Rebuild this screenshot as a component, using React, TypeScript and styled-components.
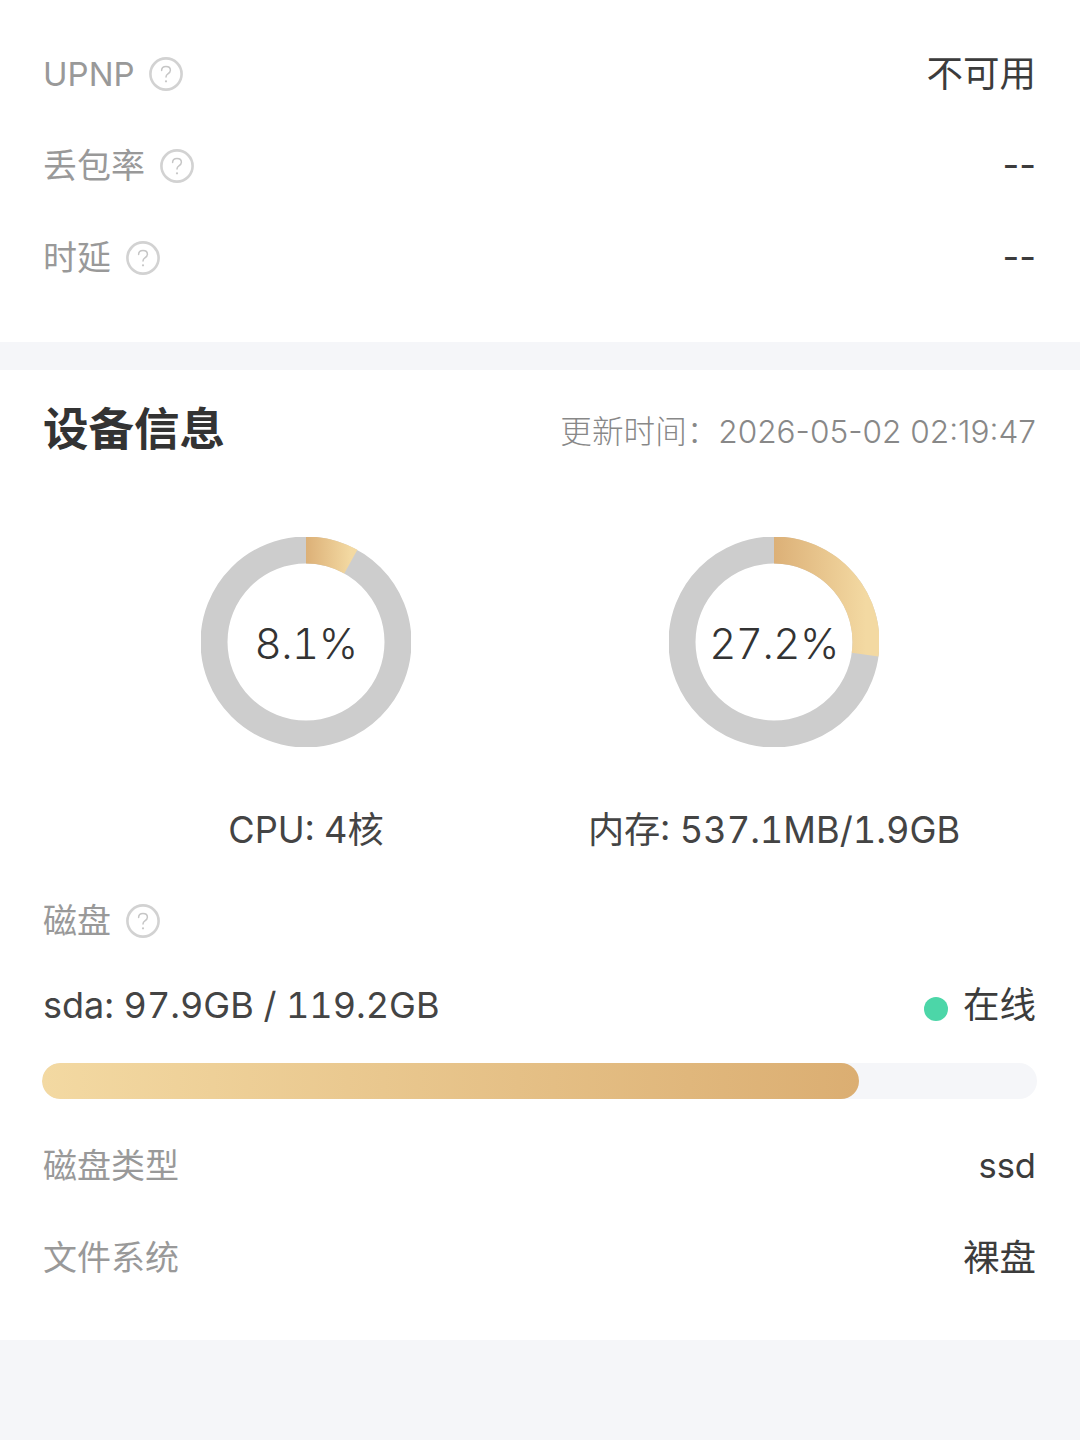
import React from "react";
import styled, { createGlobalStyle } from "styled-components";

const Global = createGlobalStyle`
  html, body { margin: 0; padding: 0; background: #f5f6f9; }
  * { box-sizing: border-box; }
  body {
    font-family: Inter, "Noto Sans CJK SC", sans-serif;
    font-kerning: none;
  }
`;

const Page = styled.div`
  width: 1080px;
  height: 1440px;
  background: #f5f6f9;
  display: flex;
  flex-direction: column;
`;

const NetworkCard = styled.section`
  background: #fff;
  height: 342px;
  padding: 28px 44px 0 43px;
  margin-bottom: 28px;
`;

const DeviceCard = styled.section`
  background: #fff;
  height: 970px;
  padding: 0 44px 0 43px;
`;

const Row = styled.div`
  height: 92px;
  display: flex;
  align-items: center;
  justify-content: space-between;
`;

const Label = styled.div`
  display: flex;
  align-items: center;
  gap: 15px;
  color: #999;
  font-weight: 400;
  font-size: 34px;
  line-height: 44px;
`;

const LatinLabel = styled(Label)`
  font-size: 33px;
  gap: 14px;
`;

const Value = styled.div<{ $size?: number }>`
  color: #3c3c3c;
  font-weight: 400;
  font-size: ${(p) => p.$size ?? 36.5}px;
  line-height: 44px;
`;

const Dashes = styled(Value)`
  margin-top: -2px;
`;

const Header = styled.div`
  height: 120px;
  display: flex;
  align-items: center;
  justify-content: space-between;
`;

const Title = styled.h2`
  margin: 0;
  font-size: 45.5px;
  font-weight: 700;
  line-height: 56px;
  color: #333;
`;

const Updated = styled.div`
  font-size: 31.6px;
  font-weight: 300;
  line-height: 44px;
  color: #888;
  margin-top: 4px;
`;

const Gauges = styled.div`
  display: grid;
  grid-template-columns: 468px 468px;
  margin: 47px 0 0 29px;
  font-variant-numeric: tabular-nums;
`;

const Gauge = styled.div`
  display: flex;
  flex-direction: column;
  align-items: center;
`;

const Ring = styled.div`
  position: relative;
  width: 210px;
  height: 210px;
`;

const Percent = styled.div`
  position: absolute;
  inset: 0;
  display: flex;
  align-items: center;
  justify-content: center;
  font-size: 42px;
  letter-spacing: -0.5px;
  font-weight: 300;
  color: #333;
  padding-top: 2px;
`;

const GaugeLabel = styled.div`
  margin-top: 56px;
  font-size: 36.2px;
  font-weight: 400;
  color: #444;
  line-height: 54px;
`;

const DiskHeading = styled(Label)`
  margin-top: 36px;
  height: 56px;
`;

const DiskRow = styled.div`
  margin-top: 28px;
  height: 56px;
  display: flex;
  align-items: center;
  justify-content: space-between;
`;

const DiskName = styled.div`
  font-size: 36px;
  font-weight: 400;
  color: #444;
  font-variant-numeric: tabular-nums;
`;

const Status = styled.div`
  display: flex;
  align-items: center;
  gap: 15px;
  font-size: 36.5px;
  font-weight: 400;
  color: #3c3c3c;
  padding-bottom: 6px;
`;

const Dot = styled.span`
  width: 24px;
  height: 24px;
  border-radius: 50%;
  background: #4cd6a8;
  margin-top: 14px;
`;

const Track = styled.div`
  margin-top: 30px;
  width: 995px;
  height: 36px;
  margin-left: -1px;
  border-radius: 18px;
  background: #f5f6f9;
  overflow: hidden;
  margin-bottom: 21px;
`;

const Fill = styled.div`
  height: 100%;
  border-radius: 18px;
  background: linear-gradient(90deg, #f3d9a2, #dbae72);
`;

const HelpIcon = () => (
  <svg width="34" height="34" viewBox="0 0 34 34" fill="none">
    <circle cx="17" cy="17" r="15.6" stroke="#d2d2d2" strokeWidth="2.6" />
    <path
      d="M12.6 13.6c0-2.6 2-4.1 4.4-4.1 2.5 0 4.4 1.5 4.4 3.7 0 1.9-1.2 2.8-2.5 3.7-1.2.8-1.9 1.5-1.9 3"
      stroke="#c6c6c6"
      strokeWidth="1.5"
      strokeLinecap="round"
    />
    <circle cx="17" cy="24.3" r="1.1" fill="#c6c6c6" />
  </svg>
);

const Donut = ({ value, id }: { value: number; id: string }) => {
  const c = 105;
  const r = 92;
  const a = (value / 100) * 2 * Math.PI;
  const x = c + r * Math.sin(a);
  const y = c - r * Math.cos(a);
  return (
    <Ring>
      <svg width="210" height="210" viewBox="0 0 210 210" fill="none">
        <defs>
          <linearGradient id={id} x1="0" y1="0" x2="1" y2="0">
            <stop offset="0" stopColor="#dcb077" />
            <stop offset="1" stopColor="#f3d9a2" />
          </linearGradient>
        </defs>
        <circle cx={c} cy={c} r={r} stroke="#cdcdcd" strokeWidth="27" />
        <path
          d={`M${c} ${c - r}A${r} ${r} 0 0 1 ${x} ${y}`}
          stroke={`url(#${id})`}
          strokeWidth="27"
        />
      </svg>
      <Percent>{value}%</Percent>
    </Ring>
  );
};

export default function App() {
  return (
    <Page>
      <Global />
      <NetworkCard>
        <Row>
          <LatinLabel>UPNP <HelpIcon /></LatinLabel>
          <Value>不可用</Value>
        </Row>
        <Row>
          <Label>丢包率 <HelpIcon /></Label>
          <Dashes>--</Dashes>
        </Row>
        <Row>
          <Label>时延 <HelpIcon /></Label>
          <Dashes>--</Dashes>
        </Row>
      </NetworkCard>
      <DeviceCard>
        <Header>
          <Title>设备信息</Title>
          <Updated>更新时间：2026-05-02 02:19:47</Updated>
        </Header>
        <Gauges>
          <Gauge>
            <Donut value={8.1} id="cpu" />
            <GaugeLabel>CPU: 4核</GaugeLabel>
          </Gauge>
          <Gauge>
            <Donut value={27.2} id="mem" />
            <GaugeLabel>内存: 537.1MB/1.9GB</GaugeLabel>
          </Gauge>
        </Gauges>
        <DiskHeading>磁盘 <HelpIcon /></DiskHeading>
        <DiskRow>
          <DiskName>sda: 97.9GB / 119.2GB</DiskName>
          <Status><Dot />在线</Status>
        </DiskRow>
        <Track>
          <Fill style={{ width: `${(97.9 / 119.2) * 100}%` }} />
        </Track>
        <Row>
          <Label>磁盘类型</Label>
          <Value $size={34.5}>ssd</Value>
        </Row>
        <Row>
          <Label>文件系统</Label>
          <Value>裸盘</Value>
        </Row>
      </DeviceCard>
    </Page>
  );
}
